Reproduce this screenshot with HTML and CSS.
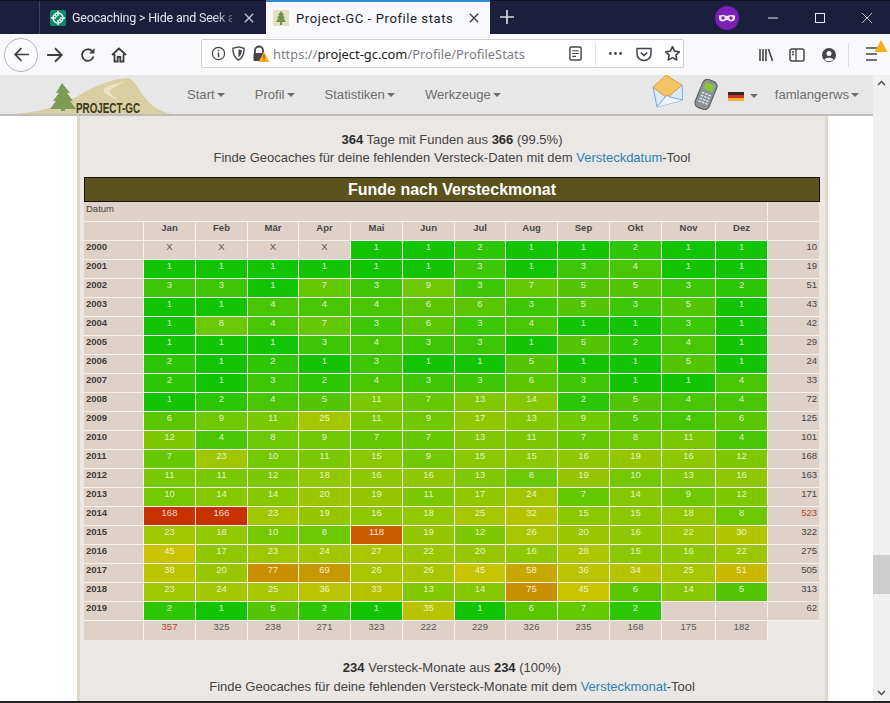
FILE: index.html
```html
<!DOCTYPE html>
<html lang="de">
<head>
<meta charset="utf-8">
<title>Project-GC - Profile stats</title>
<link rel="stylesheet" href="styles.css">
</head>
<body>
<div class="window">
  <div class="tabbar">
    <div class="tab-gap"></div>
    <div class="tab">
      <svg class="favicon" viewBox="0 0 16 16"><rect width="16" height="16" rx="2" fill="#11876a"/><circle cx="8" cy="8" r="5" fill="none" stroke="#e8f6f0" stroke-width="1.5"/><path d="M8 1v5M8 10v5M1 8h5M10 8h5M5 5l2 2M9 9l2 2" stroke="#e8f6f0" stroke-width="1.5" fill="none"/></svg>
      <span class="tab-title tab-title-fade">Geocaching &gt; Hide and Seek a</span>
      <svg class="tab-x" viewBox="0 0 12 12"><path d="M1 1l10 10M11 1L1 11" stroke="#c4c5d4" stroke-width="1.6"/></svg>
    </div>
    <div class="tab tab-active">
      <svg class="favicon" viewBox="0 0 16 16"><rect width="16" height="16" fill="#e4dfbf"/><path d="M8 1l3 4H9.500l2.500 3h-1.500L13 12H9v3H7v-3H3l2.500-4H4l2.500-3H5z" fill="#6f9150"/></svg>
      <span class="tab-title">Project-GC - Profile stats</span>
      <svg class="tab-x tab-x-active" viewBox="0 0 12 12"><path d="M1 1l10 10M11 1L1 11" stroke="#3a3a44" stroke-width="1.6"/></svg>
    </div>
    <svg class="plus" viewBox="0 0 14 14"><path d="M7 0v14M0 7h14" stroke="#d6d7e2" stroke-width="1.7"/></svg>
    <svg class="mask" viewBox="0 0 24 24"><circle cx="12" cy="12" r="12" fill="#7a1fb8"/><path d="M4 9.500c3-1 5-.5 8 .5 3-1 5-1.500 8-.5 .5 3-.5 6-3.500 6-2 0-3-1.500-4.500-1.500S9.500 15.500 7.500 15.500C4.500 15.500 3.500 12.500 4 9.500z" fill="#f2e6fa"/><circle cx="8" cy="12" r="1.700" fill="#7a1fb8"/><circle cx="16" cy="12" r="1.700" fill="#7a1fb8"/></svg>
    <div class="winctl">
      <svg viewBox="0 0 12 12"><path d="M1 6h10" stroke="#e8e8ee"/></svg>
      <svg viewBox="0 0 12 12"><rect x="1.500" y="1.500" width="9" height="9" fill="none" stroke="#e8e8ee"/></svg>
      <svg viewBox="0 0 12 12"><path d="M1 1l10 10M11 1L1 11" stroke="#e8e8ee" stroke-width=".8"/></svg>
    </div>
  </div>

  <div class="toolbar">
    <div class="back"><svg viewBox="0 0 16 16"><path d="M15 8H2M8 2L2 8l6 6" fill="none" stroke="#3c3c44" stroke-width="1.600"/></svg></div>
    <svg class="tool fwd" viewBox="0 0 16 16"><path d="M1 8h13M8 2l6 6-6 6" fill="none" stroke="#3c3c44" stroke-width="1.600"/></svg>
    <svg class="tool reload" viewBox="0 0 16 16"><path d="M13.500 9.500A5.800 5.800 0 1 1 12 4" fill="none" stroke="#3c3c44" stroke-width="1.800"/><path d="M14.500 1v5.500H9z" fill="#3c3c44"/></svg>
    <svg class="tool home" viewBox="0 0 16 16"><path d="M1 8l7-6.500L15 8M3.500 7v7.500h3.200V10h2.600v4.500h3.200V7" fill="none" stroke="#3c3c44" stroke-width="1.800"/></svg>
    <div class="urlbar">
      <svg class="ub info" viewBox="0 0 16 16"><circle cx="8" cy="8" r="6.500" fill="none" stroke="#45454d" stroke-width="1.300"/><path d="M8 7v5M8 4v1.600" stroke="#45454d" stroke-width="1.600"/></svg>
      <svg class="ub shield" viewBox="0 0 16 16"><path d="M8 1l6 1.500c0 6-1 10-6 12.500C3 12.500 2 8.500 2 2.500z" fill="none" stroke="#45454d" stroke-width="1.500"/><path d="M8 3.500l3.500 1c0 3-.6 5.500-3.500 7.500z" fill="#45454d"/></svg>
      <svg class="ub lock" viewBox="0 0 18 18"><path d="M3 8V5.500a4 4 0 0 1 8 0V8" fill="none" stroke="#45454d" stroke-width="1.800"/><rect x="1.500" y="8" width="11" height="8" rx="1" fill="#45454d"/><path d="M12 6.500l5.500 10.500h-11z" fill="#f6b01e"/><path d="M12 10v3.500M12 14.500v1" stroke="#4a3a10" stroke-width="1"/></svg>
      <div class="url">https://<b>project-gc.com</b>/Profile/ProfileStats</div>
      <svg class="ub reader" viewBox="0 0 16 16"><rect x="2" y="1" width="12" height="14" rx="1.500" fill="none" stroke="#45454d" stroke-width="1.500"/><path d="M4.500 5h7M4.500 8h7M4.500 11h4" stroke="#45454d" stroke-width="1.200"/></svg>
      <div class="ub-sep"></div>
      <svg class="ub dots" viewBox="0 0 16 16"><circle cx="2.500" cy="8" r="1.500" fill="#45454d"/><circle cx="8" cy="8" r="1.500" fill="#45454d"/><circle cx="13.500" cy="8" r="1.500" fill="#45454d"/></svg>
      <svg class="ub pocket" viewBox="0 0 16 16"><path d="M1 2.500h14V8a7 6.500 0 0 1-14 0z" fill="none" stroke="#45454d" stroke-width="1.500"/><path d="M4.800 6.500L8 9.500l3.200-3" fill="none" stroke="#45454d" stroke-width="1.700"/></svg>
      <svg class="ub star" viewBox="0 0 18 18"><path d="M9 1.800l2.200 4.700 5 .7-3.600 3.500.9 5.100L9 13.400l-4.500 2.400.9-5.100L1.800 7.200l5-.7z" fill="none" stroke="#45454d" stroke-width="1.700" stroke-linejoin="round"/></svg>
    </div>
    <svg class="tool lib" viewBox="0 0 16 16"><path d="M2 2v12M5 2v12M8 2v12M10.500 2l4 12" stroke="#45454d" stroke-width="1.600" fill="none"/></svg>
    <svg class="tool side" viewBox="0 0 16 16"><rect x="1" y="2" width="14" height="12" rx="2" fill="none" stroke="#45454d" stroke-width="1.500"/><path d="M7 2v12M3 5h2M3 7.500h2" stroke="#45454d" stroke-width="1.300"/></svg>
    <svg class="tool acct" viewBox="0 0 16 16"><circle cx="8" cy="8" r="7" fill="#45454d"/><circle cx="8" cy="6.500" r="2.500" fill="#f9f9fb"/><path d="M3.500 12.500c1-2.500 8-2.500 9 0-2 2-7 2-9 0z" fill="#f9f9fb"/></svg>
    <div class="tool-sep"></div>
    <svg class="burger" viewBox="0 0 24 22"><path d="M2 8h11M2 14h11M2 20h11" stroke="#45454d" stroke-width="1.500"/><path d="M17 0l6.500 12h-13z" fill="#f6b01e"/></svg>
  </div>

  <div class="viewport">
    <div class="page">
      <nav class="navbar">
        <div class="logo">
          <svg viewBox="0 0 172 41" width="172" height="41">
            <path d="M15 39c22-2 43-6 63-18 15-10 35-17 48-18 6 0 10 6 14 13 8 12 16 20 32 23z" fill="#d8cfa3"/>
            <path d="M104 14c6-5 14-5 20-8-3 4-12 6-14 10-1 3 6 6 8 11-3-3-8-6-12-8-3-2-3-3-2-5z" fill="#e9e3c6"/>
            <path d="M62 8l8 10h-3l6 8h-3l6 8H65v2h-4v-2H50l6-8h-3l6-8h-3z" fill="#7e9a57"/>
            <text class="logo-text" x="76" y="38" textLength="64" lengthAdjust="spacingAndGlyphs">PROJECT-GC</text>
          </svg>
        </div>
        <a class="nav-item">Start<i class="caret"></i></a>
        <a class="nav-item">Profil<i class="caret"></i></a>
        <a class="nav-item">Statistiken<i class="caret"></i></a>
        <a class="nav-item">Werkzeuge<i class="caret"></i></a>
        <div class="nav-space"></div>
        <svg class="mail" viewBox="0 0 32 34"><path d="M2 13L16 24 31 11l1 15-26 7z" fill="#dce9f8" stroke="#7fa3cc" stroke-width="1"/><path d="M2 13L15 1l16 10-15 13z" fill="#f3c464" stroke="#d9a648" stroke-width="1"/><path d="M6 33l10-12 3 2 13 3" fill="#eef5fc" stroke="#7fa3cc" stroke-width="1"/></svg>
        <svg class="phone" viewBox="0 0 26 31"><g transform="rotate(22 13 15.500)"><rect x="5.500" y="0.500" width="15" height="30" rx="5" fill="#8b9194" stroke="#55595c"/><rect x="8" y="4" width="10" height="7" rx="1" fill="#8cc63f"/><path d="M8.500 15h2.500M12 15h2.500M15.500 15h2.500M8.500 18h2.500M12 18h2.500M15.500 18h2.500M8.500 21h2.500M12 21h2.500M15.500 21h2.500M8.500 24h2.500M12 24h2.500M15.500 24h2.500" stroke="#dfe3e5" stroke-width="1.500"/></g></svg>
        <div class="flag"><span class="fb"></span><span class="fr"></span><span class="fy"></span></div>
        <i class="caret flag-caret"></i>
        <a class="nav-item user">famlangerws<i class="caret"></i></a>
      </nav>

      <main class="content">
        <p class="note"><b>364</b> Tage mit Funden aus <b>366</b> (99.5%)<br>Finde Geocaches für deine fehlenden Versteck-Daten mit dem <a class="lnk">Versteckdatum</a>-Tool</p>
        <h2 class="title">Funde nach Versteckmonat</h2>
        <table class="grid">
          <colgroup><col class="c60"><col class="c52"><col class="c52"><col class="c51"><col class="c52"><col class="c52"><col class="c52"><col class="c51"><col class="c52"><col class="c52"><col class="c52"><col class="c54"><col class="c52"><col class="c51"></colgroup>
          <tr class="r-datum"><th class="datum" colspan="13">Datum</th><th></th></tr>
          <tr class="r-head"><th></th><th>Jan</th><th>Feb</th><th>Mär</th><th>Apr</th><th>Mai</th><th>Jun</th><th>Jul</th><th>Aug</th><th>Sep</th><th>Okt</th><th>Nov</th><th>Dez</th><th></th></tr>
          <tr><th class="yr">2000</th><td class="x">X</td><td class="x">X</td><td class="x">X</td><td class="x">X</td><td class="v1">1</td><td class="v1">1</td><td class="v2">2</td><td class="v1">1</td><td class="v1">1</td><td class="v2">2</td><td class="v1">1</td><td class="v1">1</td><td class="sum">10</td></tr>
          <tr><th class="yr">2001</th><td class="v1">1</td><td class="v1">1</td><td class="v1">1</td><td class="v1">1</td><td class="v1">1</td><td class="v1">1</td><td class="v3">3</td><td class="v1">1</td><td class="v3">3</td><td class="v4">4</td><td class="v1">1</td><td class="v1">1</td><td class="sum">19</td></tr>
          <tr><th class="yr">2002</th><td class="v3">3</td><td class="v3">3</td><td class="v1">1</td><td class="v7">7</td><td class="v3">3</td><td class="v9">9</td><td class="v3">3</td><td class="v7">7</td><td class="v5">5</td><td class="v5">5</td><td class="v3">3</td><td class="v2">2</td><td class="sum">51</td></tr>
          <tr><th class="yr">2003</th><td class="v1">1</td><td class="v1">1</td><td class="v4">4</td><td class="v4">4</td><td class="v4">4</td><td class="v6">6</td><td class="v6">6</td><td class="v3">3</td><td class="v5">5</td><td class="v3">3</td><td class="v5">5</td><td class="v1">1</td><td class="sum">43</td></tr>
          <tr><th class="yr">2004</th><td class="v1">1</td><td class="v8">8</td><td class="v4">4</td><td class="v7">7</td><td class="v3">3</td><td class="v6">6</td><td class="v3">3</td><td class="v4">4</td><td class="v1">1</td><td class="v1">1</td><td class="v3">3</td><td class="v1">1</td><td class="sum">42</td></tr>
          <tr><th class="yr">2005</th><td class="v1">1</td><td class="v1">1</td><td class="v1">1</td><td class="v3">3</td><td class="v4">4</td><td class="v3">3</td><td class="v3">3</td><td class="v1">1</td><td class="v5">5</td><td class="v2">2</td><td class="v4">4</td><td class="v1">1</td><td class="sum">29</td></tr>
          <tr><th class="yr">2006</th><td class="v2">2</td><td class="v1">1</td><td class="v2">2</td><td class="v1">1</td><td class="v3">3</td><td class="v1">1</td><td class="v1">1</td><td class="v5">5</td><td class="v1">1</td><td class="v1">1</td><td class="v5">5</td><td class="v1">1</td><td class="sum">24</td></tr>
          <tr><th class="yr">2007</th><td class="v2">2</td><td class="v1">1</td><td class="v3">3</td><td class="v2">2</td><td class="v4">4</td><td class="v3">3</td><td class="v3">3</td><td class="v6">6</td><td class="v3">3</td><td class="v1">1</td><td class="v1">1</td><td class="v4">4</td><td class="sum">33</td></tr>
          <tr><th class="yr">2008</th><td class="v1">1</td><td class="v2">2</td><td class="v4">4</td><td class="v5">5</td><td class="v11">11</td><td class="v7">7</td><td class="v13">13</td><td class="v14">14</td><td class="v2">2</td><td class="v5">5</td><td class="v4">4</td><td class="v4">4</td><td class="sum">72</td></tr>
          <tr><th class="yr">2009</th><td class="v6">6</td><td class="v9">9</td><td class="v11">11</td><td class="v25">25</td><td class="v11">11</td><td class="v9">9</td><td class="v17">17</td><td class="v13">13</td><td class="v9">9</td><td class="v5">5</td><td class="v4">4</td><td class="v6">6</td><td class="sum">125</td></tr>
          <tr><th class="yr">2010</th><td class="v12">12</td><td class="v4">4</td><td class="v8">8</td><td class="v9">9</td><td class="v7">7</td><td class="v7">7</td><td class="v13">13</td><td class="v11">11</td><td class="v7">7</td><td class="v8">8</td><td class="v11">11</td><td class="v4">4</td><td class="sum">101</td></tr>
          <tr><th class="yr">2011</th><td class="v7">7</td><td class="v23">23</td><td class="v10">10</td><td class="v11">11</td><td class="v15">15</td><td class="v9">9</td><td class="v15">15</td><td class="v15">15</td><td class="v16">16</td><td class="v19">19</td><td class="v16">16</td><td class="v12">12</td><td class="sum">168</td></tr>
          <tr><th class="yr">2012</th><td class="v11">11</td><td class="v11">11</td><td class="v12">12</td><td class="v18">18</td><td class="v16">16</td><td class="v16">16</td><td class="v13">13</td><td class="v8">8</td><td class="v19">19</td><td class="v10">10</td><td class="v13">13</td><td class="v16">16</td><td class="sum">163</td></tr>
          <tr><th class="yr">2013</th><td class="v10">10</td><td class="v14">14</td><td class="v14">14</td><td class="v20">20</td><td class="v19">19</td><td class="v11">11</td><td class="v17">17</td><td class="v24">24</td><td class="v7">7</td><td class="v14">14</td><td class="v9">9</td><td class="v12">12</td><td class="sum">171</td></tr>
          <tr><th class="yr">2014</th><td class="v168">168</td><td class="v168">166</td><td class="v23">23</td><td class="v19">19</td><td class="v16">16</td><td class="v18">18</td><td class="v25">25</td><td class="v32">32</td><td class="v15">15</td><td class="v15">15</td><td class="v18">18</td><td class="v8">8</td><td class="sum red">523</td></tr>
          <tr><th class="yr">2015</th><td class="v23">23</td><td class="v18">18</td><td class="v10">10</td><td class="v8">8</td><td class="v118">118</td><td class="v19">19</td><td class="v12">12</td><td class="v26">26</td><td class="v20">20</td><td class="v16">16</td><td class="v22">22</td><td class="v30">30</td><td class="sum">322</td></tr>
          <tr><th class="yr">2016</th><td class="v45">45</td><td class="v17">17</td><td class="v23">23</td><td class="v24">24</td><td class="v27">27</td><td class="v22">22</td><td class="v20">20</td><td class="v16">16</td><td class="v28">28</td><td class="v15">15</td><td class="v16">16</td><td class="v22">22</td><td class="sum">275</td></tr>
          <tr><th class="yr">2017</th><td class="v38">38</td><td class="v20">20</td><td class="v77">77</td><td class="v69">69</td><td class="v26">26</td><td class="v26">26</td><td class="v45">45</td><td class="v58">58</td><td class="v36">36</td><td class="v34">34</td><td class="v25">25</td><td class="v51">51</td><td class="sum">505</td></tr>
          <tr><th class="yr">2018</th><td class="v23">23</td><td class="v24">24</td><td class="v25">25</td><td class="v36">36</td><td class="v33">33</td><td class="v13">13</td><td class="v14">14</td><td class="v77">75</td><td class="v45">45</td><td class="v6">6</td><td class="v14">14</td><td class="v5">5</td><td class="sum">313</td></tr>
          <tr><th class="yr">2019</th><td class="v2">2</td><td class="v1">1</td><td class="v5">5</td><td class="v2">2</td><td class="v1">1</td><td class="v35">35</td><td class="v1">1</td><td class="v6">6</td><td class="v7">7</td><td class="v2">2</td><td class="x"></td><td class="x"></td><td class="sum">62</td></tr>
          <tr class="r-foot"><th class="yr"></th><td class="x red">357</td><td class="x">325</td><td class="x">238</td><td class="x">271</td><td class="x">323</td><td class="x">222</td><td class="x">229</td><td class="x">326</td><td class="x">235</td><td class="x">168</td><td class="x">175</td><td class="x">182</td><td class="none"></td></tr>
        </table>
        <p class="note note-low"><b>234</b> Versteck-Monate aus <b>234</b> (100%)<br>Finde Geocaches für deine fehlenden Versteck-Monate mit dem <a class="lnk">Versteckmonat</a>-Tool</p>
      </main>
    </div>
    <div class="scrollbar">
      <svg class="sb-arrow" viewBox="0 0 17 17"><path d="M5 10l3.500-3.500L12 10" fill="none" stroke="#505050" stroke-width="1.500"/></svg>
      <div class="sb-thumb"></div>
      <div class="nav-space"></div>
      <svg class="sb-arrow" viewBox="0 0 17 17"><path d="M5 7l3.500 3.500L12 7" fill="none" stroke="#505050" stroke-width="1.500"/></svg>
    </div>
  </div>
</div>
</body>
</html>
```
FILE: styles.css
```css
* { box-sizing: border-box; }
html, body { margin: 0; padding: 0; height: 100%; overflow: hidden; }
body { font-family: "Liberation Sans", Arial, sans-serif; background: #fff; }
.window { width: 890px; height: 703px; display: flex; flex-direction: column; overflow: hidden; border-bottom: 2px solid #222; }

/* tab strip */
.tabbar { height: 34px; flex: none; background: #1c1e3e; display: flex; align-items: stretch; border-top: 1px solid #10101e; }
.tab-gap { width: 40px; border-right: 1px solid #3e4060; }
.tab { width: 226px; display: flex; align-items: center; padding-left: 10px; color: #e4e5ee; }
.tab-active { width: 224px; background: #f9f9fb; color: #20202a; border-top: 2px solid #2a8fd8; padding-left: 7px; margin-top: -1px; }
.favicon { width: 16px; height: 16px; flex: none; }
.tab-title { font-family: Roboto, sans-serif; font-size: 12.5px; letter-spacing: -.2px; margin-left: 6px; width: 160px; white-space: nowrap; flex: none; }
.tab-title-fade { -webkit-mask-image: linear-gradient(90deg, #000 88%, rgba(0,0,0,.35) 100%); mask-image: linear-gradient(90deg, #000 88%, rgba(0,0,0,.35) 100%); }
.tab-active .tab-title { margin-left: 7px; width: 150px; font-size: 13px; letter-spacing: .6px; }
.tab-x { width: 10px; height: 10px; margin-left: 12px; flex: none; }
.tab-x-active { margin-left: 23px; }
.plus { width: 14px; height: 14px; margin: 9px 0 0 10px; }
.mask { width: 24px; height: 24px; margin: 5px 0 0 201px; }
.winctl { display: flex; align-items: center; margin-left: 28px; gap: 35px; }
.winctl svg { width: 12px; height: 12px; }

/* toolbar */
.toolbar { height: 41px; flex: none; background: #f9f9fb; display: flex; align-items: center; padding-left: 4px; }
.back { width: 34px; height: 34px; border: 1px solid #b4b4b8; border-radius: 50%; display: flex; align-items: center; justify-content: center; background: #fbfbfd; }
.back svg { width: 17px; height: 17px; }
.tool { width: 16px; height: 16px; flex: none; }
.fwd { margin-left: 8px; width: 18px; height: 18px; }
.reload { margin-left: 16px; }
.home { margin-left: 15px; }
.urlbar { width: 483px; height: 29px; margin-left: 74px; border: 1px solid #cfcfd2; border-radius: 2px; background: #fff; display: flex; align-items: center; padding-left: 9px; margin-top: -2px; }
.ub { width: 15px; height: 15px; flex: none; }
.shield { margin-left: 5px; }
.lock { margin-left: 6px; width: 18px; height: 18px; }
.url { font-family: "Noto Sans", sans-serif; font-size: 12.9px; color: #7d7d85; width: 289px; margin-left: 3px; white-space: nowrap; }
.url b { font-weight: 400; color: #1c1c24; }
.reader { margin-left: 6px; }
.ub-sep { width: 1px; height: 22px; background: #e2e2e6; margin-left: 12px; }
.dots { margin-left: 12px; }
.pocket { margin-left: 13px; width: 16px; height: 16px; }
.star { margin-left: 12px; width: 17px; height: 17px; }
.lib { margin-left: 74px; }
.side { margin-left: 15px; }
.acct { margin-left: 16px; }
.tool-sep { width: 1px; height: 24px; background: #dedee2; margin-left: 11px; }
.burger { width: 24px; height: 22px; margin-left: 15px; margin-top: -7px; flex: none; }

/* viewport */
.viewport { flex: 1; min-height: 0; display: flex; }
.page { width: 873px; flex: none; display: flex; flex-direction: column; overflow: hidden; }
.navbar { height: 41px; flex: none; background: #e7e7e7; border-bottom: 2px solid #bdbdbd; display: flex; align-items: center; color: #6e6e6e; }
.logo { width: 172px; height: 41px; flex: none; margin-top: 1px; }
.logo svg { display: block; }
.logo-text { font-family: "Liberation Sans", sans-serif; font-weight: 700; font-size: 14px; fill: #3b3a22; }
.nav-item { font-size: 13.1px; padding: 0 15px; white-space: nowrap; display: flex; align-items: center; }
.caret { display: inline-block; width: 0; height: 0; margin-left: 2px; border-left: 4px solid transparent; border-right: 4px solid transparent; border-top: 4px solid #6e6e6e; }
.nav-space { flex: 1; }
.mail { width: 32px; height: 34px; margin-top: -7px; flex: none; }
.phone { width: 26px; height: 31px; margin-left: 10px; flex: none; }
.flag { width: 16px; height: 10px; margin: 4px 0 0 9px; display: flex; flex-direction: column; flex: none; }
.flag span { flex: 1; }
.fb { background: #2a2a2a; }
.fr { background: #d03020; }
.fy { background: #eab830; }
.flag-caret { margin: 2px 0 0 6px; }
.user { padding: 0 14px 0 17px; }

/* content */
.content { width: 751px; margin-left: 77px; flex: 1; background: #ebe7e4; border-left: 3px solid #dfd6cc; border-right: 3px solid #dfd6cc; padding: 15px 5px 0 4px; }
.note { margin: 0; font-size: 13px; line-height: 18px; text-align: center; color: #444; }
.note-low { margin-top: 18px; line-height: 19px; }
.note b { color: #2e2e2e; }
.lnk { color: #2a82b8; }
.title { margin: 10px 0 0; height: 25px; background: #5b521d; border: 1px solid #111; color: #fff; font-size: 16px; line-height: 23px; text-align: center; font-weight: 700; }

/* month grid */
.grid { border-collapse: separate; border-spacing: 0; table-layout: fixed; width: 735px; font-size: 9.500px; }
.c60 { width: 60px; } .c52 { width: 52px; } .c51 { width: 51px; } .c54 { width: 54px; }
.grid th, .grid td { height: 19px; padding: 0; border-right: 1px solid #f6f3ef; border-bottom: 1px solid #f6f3ef; background: #ded2c8; text-align: center; vertical-align: top; line-height: 11px; overflow: hidden; white-space: nowrap; }
.grid tr > :last-child { border-right: 0; }
.grid td { color: rgba(255, 255, 255, .82); }
.grid th { color: #484848; font-weight: 700; }
.r-datum th { height: 20px; line-height: 13px; }
.r-head th { line-height: 12px; }
.grid .datum { text-align: left; padding-left: 2px; font-weight: 400; color: #444; }
.grid .yr { text-align: left; padding-left: 2px; color: #3e3e3e; }
.grid .x { color: #555; background: #ded2c8; }
.grid .sum { color: #444; text-align: right; padding-right: 2px; background: #ded2c8; }
.grid .red { color: #c0392b; }
.r-foot td, .r-foot th { border-bottom: 0; }
.grid .none { background: transparent; }

.v1 { background: #12c404 !important; } .v2 { background: #2cc604 !important; } .v3 { background: #3cc604 !important; }
.v4 { background: #48c604 !important; } .v5 { background: #52c604 !important; } .v6 { background: #5ac602 !important; }
.v7 { background: #64c802 !important; } .v8 { background: #6cc802 !important; } .v9 { background: #70c802 !important; }
.v10 { background: #74c800 !important; } .v11 { background: #7ac800 !important; } .v12 { background: #7ec800 !important; }
.v13 { background: #82c800 !important; } .v14 { background: #86c800 !important; } .v15 { background: #8ac800 !important; }
.v16 { background: #8ec800 !important; } .v17 { background: #90c800 !important; } .v18 { background: #92c800 !important; }
.v19 { background: #94c600 !important; } .v20 { background: #98c600 !important; } .v22 { background: #9cc600 !important; }
.v23 { background: #a0c600 !important; } .v24 { background: #a2c600 !important; } .v25 { background: #a6c600 !important; }
.v26 { background: #a8c600 !important; } .v27 { background: #aac600 !important; } .v28 { background: #acc600 !important; }
.v30 { background: #b0c600 !important; } .v32 { background: #b2c400 !important; } .v33 { background: #b4c400 !important; }
.v34 { background: #b6c400 !important; } .v35 { background: #b8c400 !important; } .v36 { background: #bac400 !important; }
.v38 { background: #bcc400 !important; } .v45 { background: #c8c400 !important; } .v51 { background: #c8b800 !important; }
.v58 { background: #c8a800 !important; } .v69 { background: #c89800 !important; } .v77 { background: #c89000 !important; }
.v118 { background: #c85c00 !important; } .v168 { background: #c83200 !important; }

/* scrollbar */
.scrollbar { width: 17px; flex: none; background: #f0f0f0; display: flex; flex-direction: column; }
.sb-arrow { width: 17px; height: 17px; flex: none; }
.sb-thumb { height: 39px; background: #cdcdcd; margin-top: 463px; flex: none; }
```
